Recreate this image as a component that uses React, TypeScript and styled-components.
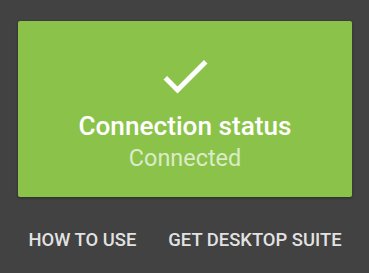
import React from "react";
import styled, { createGlobalStyle } from "styled-components";

const Global = createGlobalStyle`
  html, body {
    margin: 0;
    padding: 0;
    background: #424242;
    width: 369px;
    height: 273px;
    overflow: hidden;
  }
  body {
    font-family: Roboto, "Noto Sans", "Liberation Sans", sans-serif;
  }
`;

const Screen = styled.div`
  display: flex;
  flex-direction: column;
  padding: 21px 17px 0 18px;
`;

const Card = styled.div`
  height: 176px;
  background: #8bc34a;
  border-radius: 2px;
  box-shadow: 0 1px 3px rgba(0, 0, 0, 0.35);
  display: flex;
  flex-direction: column;
  align-items: center;
  padding-top: 25px;
  box-sizing: border-box;
`;

const Title = styled.div`
  color: #ffffff;
  font-size: 26.2px;
  font-weight: 500;
  line-height: 28px;
  margin-top: 6px;
`;

const Subtitle = styled.div`
  color: rgba(255, 255, 255, 0.7);
  font-size: 23.4px;
  font-weight: 400;
  line-height: 28px;
  margin-top: 4px;
`;

const Actions = styled.div`
  display: flex;
  justify-content: center;
  gap: 10px;
  margin-top: 27px;
`;

const TextButton = styled.button`
  background: none;
  border: none;
  padding: 6px 11px;
  font-family: Roboto, "Noto Sans", "Liberation Sans", sans-serif;
  font-size: 18.4px;
  font-weight: 500;
  line-height: 20px;
  white-space: nowrap;
  color: rgba(255, 255, 255, 0.87);
  text-transform: uppercase;
  cursor: pointer;
`;

const Check = () => (
  <svg width="60" height="60" viewBox="0 0 24 24" fill="#ffffff">
    <path d="M9 16.17L4.83 12l-1.42 1.41L9 19 21 7l-1.41-1.41z" />
  </svg>
);

export default function App() {
  return (
    <>
      <Global />
      <Screen>
        <Card>
          <Check />
          <Title>Connection status</Title>
          <Subtitle>Connected</Subtitle>
        </Card>
        <Actions>
          <TextButton>How to use</TextButton>
          <TextButton>Get desktop suite</TextButton>
        </Actions>
      </Screen>
    </>
  );
}
